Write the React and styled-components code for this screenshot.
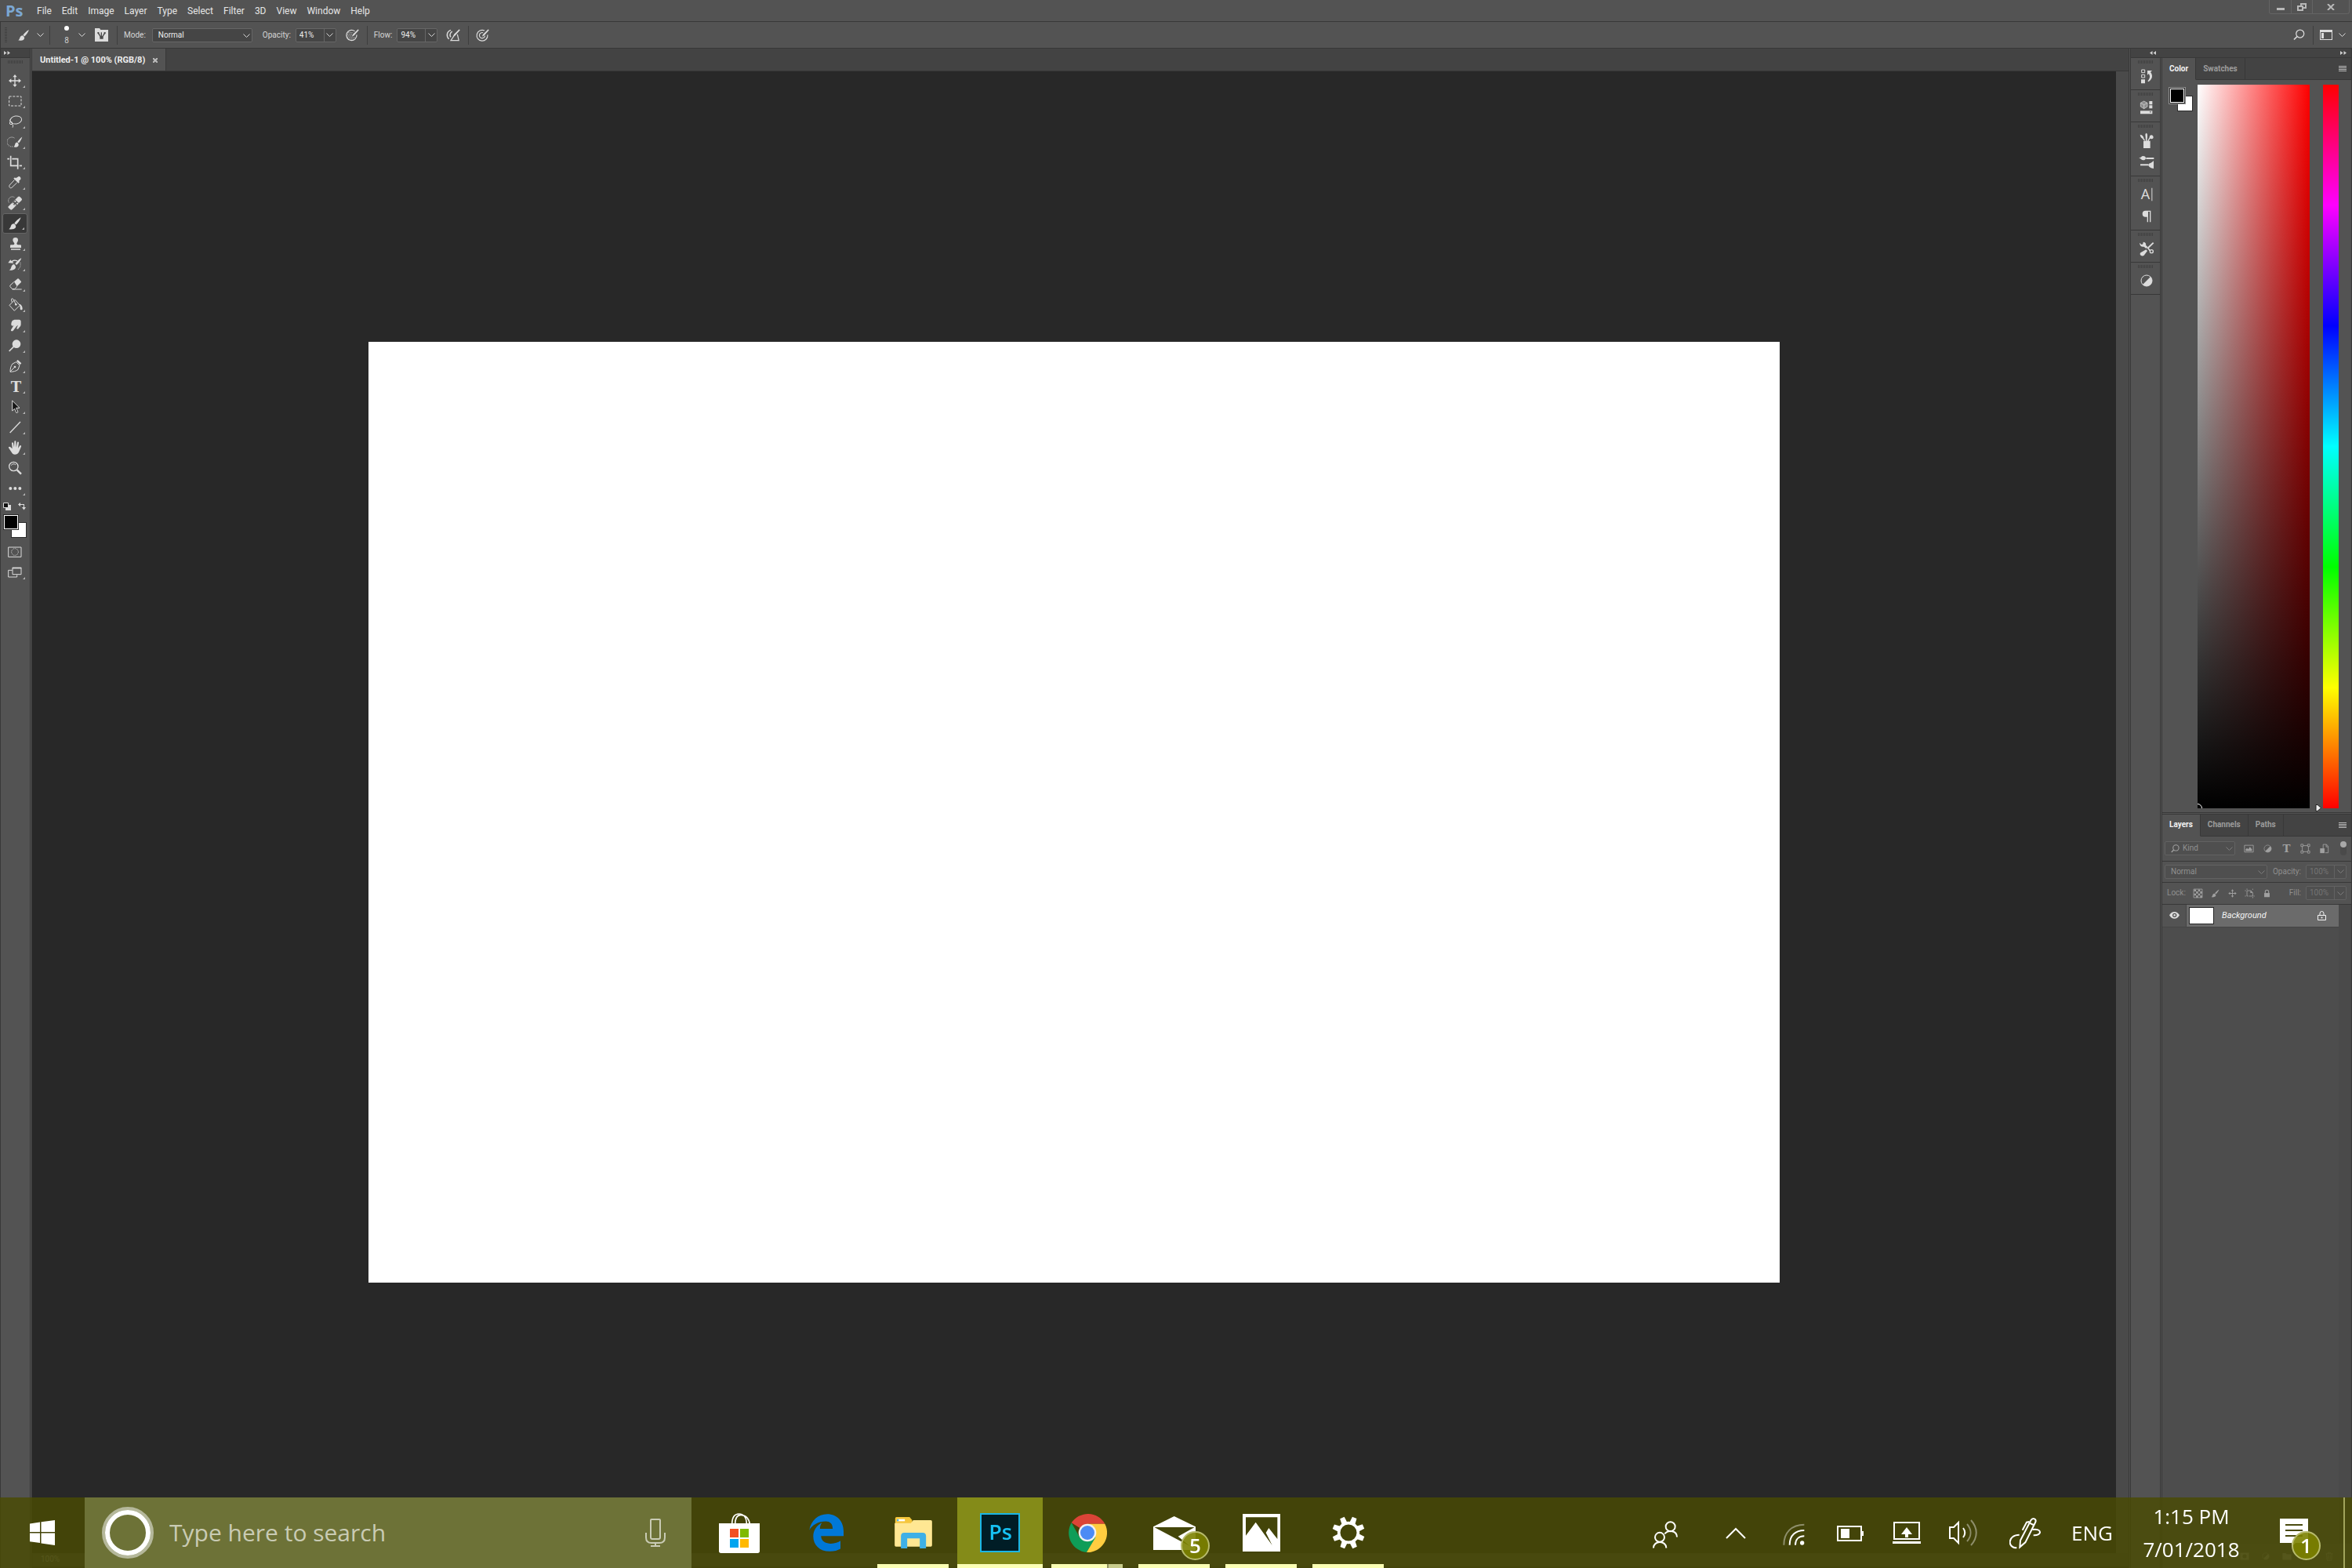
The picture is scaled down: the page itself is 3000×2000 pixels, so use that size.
import React, { useState } from 'react';
import styled, { createGlobalStyle, css } from 'styled-components';

const GlobalStyle = createGlobalStyle`
  *, *::before, *::after { box-sizing: border-box; }
  html, body, #root { height: 100%; }
  body {
    margin: 0;
    overflow: hidden;
    background: #282828;
    color: #dcdcdc;
    font-family: Roboto, 'Liberation Sans', sans-serif;
    font-size: 10px;
    line-height: 14px;
  }
  button, input, select { font: inherit; color: inherit; }
  svg { display: block; flex: none; }
`;

const LINE = '#383838';
const PANEL = '#535353';
const DARK = '#434343';

const Window = styled.div`
  display: flex;
  flex-direction: column;
  height: 100vh;
  background: ${PANEL};
`;

const PlainButton = styled.button`
  display: flex;
  align-items: center;
  justify-content: center;
  margin: 0;
  padding: 0;
  border: 0;
  outline: 0;
  background: transparent;
  cursor: pointer;
`;

/* ---- menu bar ---- */

const MenuBar = styled.header`
  display: flex;
  align-items: center;
  height: 28px;
  flex: none;
  padding: 0 3px 0 7px;
  border-bottom: 1px solid ${LINE};
`;

const PsLogo = styled.span`
  width: 34px;
  font: 700 20px/24px 'Open Sans', sans-serif;
  color: #7ba7d3;
`;

const MenuItem = styled(PlainButton)`
  padding: 0 7px 0 6px;
  font-size: 12px;
  line-height: 16px;
  color: #e6e6e6;
`;

const WindowControls = styled.div`
  display: flex;
  align-self: flex-start;
  height: 18px;
  margin-left: auto;
  border: 1px solid #646464;
  border-top: 0;
  border-radius: 0 0 3px 3px;
`;

const WindowControl = styled(PlainButton)`
  width: ${(p) => p.$width}px;
  & + & {
    border-left: 1px solid #646464;
  }
`;

/* ---- options bar ---- */

const OptionsBar = styled.div`
  display: flex;
  align-items: center;
  height: 34px;
  flex: none;
  padding: 0 8px 0 5px;
  border-bottom: 1px solid ${LINE};
  border-left: 1px solid ${LINE};
`;

const SideGrip = styled.span`
  width: 3px;
  height: 20px;
  background: repeating-linear-gradient(#414141 0 1px, transparent 1px 2px);
`;

const Separator = styled.span`
  width: 1px;
  height: 24px;
  margin: 0 ${(p) => p.$right || 8}px 0 ${(p) => p.$left || 10}px;
  background: #3e3e3e;
`;

const OptionButton = styled(PlainButton)`
  gap: 8px;
  margin-left: ${(p) => p.$left || 0}px;
`;

const BrushSize = styled.span`
  display: flex;
  flex-direction: column;
  align-items: center;
  justify-content: space-between;
  width: 14px;
  height: 24px;
  color: #cfcfcf;
  line-height: 10px;

  &::before {
    content: '';
    width: 6px;
    height: 6px;
    border-radius: 3px;
    background: #fff;
  }
`;

const Field = styled.div`
  display: flex;
  align-items: center;
  gap: ${(p) => p.$gap || 6}px;
  margin-left: ${(p) => p.$left || 0}px;
  color: ${(p) => (p.$dim ? '#8f8f8f' : '#d6d6d6')};
`;

const SelectBox = styled.span`
  position: relative;
  display: flex;
  width: ${(p) => p.$width}px;
  height: 18px;
  color: ${(p) => (p.$dim ? '#7d7d7d' : '#d6d6d6')};

  svg {
    position: absolute;
    right: 3px;
    top: 7px;
    pointer-events: none;
  }
`;

const Select = styled.select`
  width: 100%;
  height: 18px;
  padding: 0 7px;
  border: 1px solid ${(p) => (p.$dim ? '#626262' : '#666')};
  border-radius: 2px;
  outline: 0;
  appearance: none;
  background: ${(p) => (p.$dim ? '#4f4f4f' : '#454545')};
  color: ${(p) => (p.$dim ? '#919191' : '#ececec')};
`;

const ValueBox = styled.span`
  display: flex;
  height: 18px;
  border: 1px solid ${(p) => (p.$dim ? '#626262' : '#666')};
  border-radius: 2px;
  background: ${(p) => (p.$dim ? '#4f4f4f' : '#454545')};
  color: ${(p) => (p.$dim ? '#747474' : '#ececec')};

  input {
    width: 35px;
    padding: 0 0 0 4px;
    border: 0;
    outline: 0;
    background: transparent;
  }

  button {
    width: 15px;
    border-left: 1px solid ${(p) => (p.$dim ? '#626262' : '#666')};
    color: ${(p) => (p.$dim ? '#7d7d7d' : '#d6d6d6')};
  }
`;

const OptionsRight = styled.div`
  display: flex;
  align-items: center;
  margin-left: auto;
`;

/* ---- workspace ---- */

const Workspace = styled.main`
  display: flex;
  flex: 1;
  min-height: 0;
`;

const ToolColumn = styled.nav`
  display: flex;
  flex-direction: column;
  width: 39px;
  flex: none;
  border: solid ${LINE};
  border-width: 0 1px;
`;

const ColumnHeader = styled.div`
  display: flex;
  align-items: center;
  justify-content: space-between;
  height: 12px;
  flex: none;
  padding: 0 6px 0 ${(p) => p.$left || 4}px;
  border-bottom: 1px solid ${LINE};
  background: ${DARK};
`;

const Grip = styled.span`
  width: 19px;
  height: 4px;
  margin: 3px auto ${(p) => p.$bottom || 0}px;
  flex: none;
  background: repeating-linear-gradient(90deg, #404040 0 1px, transparent 1px 2px);
`;

const ToolButton = styled(PlainButton)`
  position: relative;
  width: 32px;
  height: 26px;
  margin-left: 2px;
  border-radius: 3px;

  ${(p) =>
    p.$active &&
    css`
      border: 1px solid #666;
      background: #383838;
    `}

  ${(p) =>
    p.$more &&
    css`
      &::after {
        content: '';
        position: absolute;
        right: 3px;
        bottom: 4px;
        border-left: 3px solid transparent;
        border-bottom: 3px solid #b4b4b4;
      }
    `}
`;

const SwatchActions = styled.div`
  display: flex;
  justify-content: space-between;
  padding: 5px 5px 5px 3px;
`;

const Swatches = styled.div`
  position: relative;
  width: 30px;
  height: 30px;
  margin: ${(p) => p.$margin || '0'};
  flex: none;

  &::before,
  &::after {
    content: '';
    position: absolute;
    width: 20px;
    height: 20px;
    border: 1px solid #2c2c2c;
    background: #fff;
  }
  &::before {
    right: 0;
    bottom: 0;
  }
  &::after {
    left: 0;
    top: 0;
    background: #000;
    box-shadow: inset 0 0 0 1px #fff;
    outline: ${(p) => (p.$ring ? '1px solid #909090' : 'none')};
  }
`;

const DocumentArea = styled.section`
  display: flex;
  flex-direction: column;
  flex: 1;
  min-width: 0;
  margin: 0 1px;
  border: solid ${LINE};
  border-width: 0 1px;
`;

const DocumentTabs = styled.div`
  display: flex;
  height: 29px;
  flex: none;
  border-bottom: 1px solid ${LINE};
  background: ${DARK};
`;

const DocumentTab = styled.div`
  display: flex;
  align-items: center;
  gap: 10px;
  padding: 2px 10px 0;
  border-right: 1px solid ${LINE};
  background: ${PANEL};
  color: #eee;
  font-size: 11px;
  font-weight: 700;
`;

const Viewport = styled.div`
  display: flex;
  flex: 1;
  min-height: 0;
`;

const Pasteboard = styled.div`
  display: flex;
  align-items: center;
  justify-content: center;
  flex: 1;
  min-width: 0;
  overflow: hidden;
  background: #282828;
`;

const Artboard = styled.canvas`
  background: #fff;
`;

const ScrollTrack = styled.div`
  width: 16px;
  background: #4a4a4a;
`;

const StatusBar = styled.footer`
  display: flex;
  align-items: center;
  height: 19px;
  flex: none;
  padding: 0 0 2px 11px;
  border-bottom: 2px solid #303030;
  background: #464646;
  color: #8a8a8a;
`;

/* ---- right dock ---- */

const Dock = styled.aside`
  display: flex;
  flex-direction: column;
  width: 283px;
  flex: none;
  border: solid ${LINE};
  border-width: 0 1px;
`;

const DockBody = styled.div`
  display: flex;
  flex: 1;
  min-height: 0;
`;

const IconRail = styled.div`
  display: flex;
  flex-direction: column;
  width: 38px;
  flex: none;
  margin-right: 1px;
  border-right: 1px solid ${LINE};
`;

const RailGroup = styled.div`
  display: flex;
  flex-direction: column;
  padding-bottom: 3px;
  border-bottom: 1px solid ${LINE};
`;

const RailButton = styled(PlainButton)`
  height: 28px;
  padding-left: 2px;
`;

const Panels = styled.div`
  display: flex;
  flex-direction: column;
  flex: 1;
  min-width: 0;
  border-left: 1px solid ${LINE};
`;

const Panel = styled.section`
  display: flex;
  flex-direction: column;
  flex: 1 1 0;
  min-height: 0;

  & + & {
    background: #4d4d4d;
  }
  &:first-child {
    border-bottom: 3px double ${LINE};
  }
`;

const PanelTabs = styled.div`
  display: flex;
  height: 28px;
  flex: none;
  background: ${DARK};
`;

const PanelTab = styled(PlainButton)`
  padding: 0 9px;
  border-right: 1px solid ${LINE};
  border-bottom: 1px solid ${(p) => (p.$active ? PANEL : LINE)};
  background: ${(p) => (p.$active ? PANEL : DARK)};
  color: ${(p) => (p.$active ? '#f2f2f2' : '#9c9c9c')};
  font-weight: 700;
`;

const PanelMenu = styled(PlainButton)`
  flex: 1;
  justify-content: flex-end;
  padding-right: 6px;
  border-bottom: 1px solid ${LINE};
`;

const ColorBody = styled.div`
  display: flex;
  flex: 1;
  min-height: 0;
  padding: 6px 16px 5px 9px;
`;

const ColorField = styled.div`
  position: relative;
  flex: 1;
  overflow: hidden;
  margin: 0 17px 0 6px;
  background: linear-gradient(to top, #000, transparent),
    linear-gradient(to right, #fff, #f00);

  &::after {
    content: '';
    position: absolute;
    left: -6px;
    bottom: -6px;
    width: 12px;
    height: 12px;
    border: 1px solid #fff;
    border-radius: 6px;
  }
`;

const HueStrip = styled.div`
  position: relative;
  width: 20px;
  background: linear-gradient(#f00, #f0f, #00f, #0ff, #0f0, #ff0, #f00);

  svg {
    position: absolute;
    left: -10px;
    bottom: -4px;
  }
`;

const LayerRow = styled.div`
  display: flex;
  align-items: center;
  height: ${(p) => p.$height}px;
  flex: none;
  padding: 0 6px 0 ${(p) => p.$left || 3}px;
  border-bottom: 1px solid ${LINE};
  background: ${PANEL};
`;

const KindBox = styled(SelectBox)`
  select {
    padding-left: 22px;
  }
  svg:first-child {
    left: 8px;
    top: 4px;
    right: auto;
  }
`;

const LayerIcons = styled.div`
  display: flex;
  align-items: center;
  gap: ${(p) => p.$gap}px;
  margin-left: ${(p) => p.$left}px;
  color: #a0a0a0;
`;

const FilterToggle = styled(PlainButton)`
  align-items: flex-start;
  width: 8px;
  height: 18px;
  margin-left: auto;
  border-radius: 4px;
  background: #4a4a4a;

  &::before {
    content: '';
    width: 8px;
    height: 8px;
    border-radius: 4px;
    background: #a8a8a8;
  }
`;

const LayerList = styled.div`
  display: flex;
  flex: 1;
  min-height: 0;
`;

const LayerItems = styled.div`
  flex: 1;
`;

const LayerItem = styled.div`
  display: flex;
  height: 29px;
  border-bottom: 1px solid #454545;
`;

const EyeButton = styled(PlainButton)`
  width: 31px;
  border-right: 1px solid #454545;
  background: ${PANEL};
`;

const LayerBody = styled.div`
  display: flex;
  align-items: center;
  flex: 1;
  padding: 0 16px 0 3px;
  background: #6b6b6b;
  color: #f4f4f4;
  font-size: 11px;
  font-style: italic;

  svg {
    margin-left: auto;
  }
`;

const Thumb = styled.span`
  width: 32px;
  height: 22px;
  margin-right: 10px;
  border: 1px solid #262626;
  background: #fff;
`;

const LayersFooter = styled.footer`
  display: flex;
  align-items: center;
  justify-content: flex-end;
  gap: 15px;
  height: 31px;
  flex: none;
  padding: 0 22px;
  background: ${PANEL};
  color: #8a8a8a;
`;

/* ---- windows taskbar ---- */

const Taskbar = styled.footer`
  position: fixed;
  right: 0;
  bottom: 0;
  left: 0;
  display: flex;
  height: 90px;
  background: rgba(73, 74, 2, 0.82);
  color: #fff;
  font-family: 'Open Sans', sans-serif;
  font-size: 26px;
  line-height: 42px;
`;

const StartButton = styled(PlainButton)`
  width: 108px;
`;

const SearchBox = styled.label`
  display: flex;
  align-items: center;
  width: 774px;
  margin-right: 6px;
  padding: 0 33px 0 22px;
  background: #6d7237;

  input {
    flex: 1;
    min-width: 0;
    margin-left: 20px;
    padding: 0;
    border: 0;
    outline: 0;
    background: transparent;
    font-size: 30px;
    line-height: 40px;

    &::placeholder {
      color: #c9cbb4;
      opacity: 1;
    }
  }
`;

const AppButton = styled(PlainButton)`
  position: relative;
  width: 109px;
  margin-right: 2px;
  background: ${(p) => (p.$active ? '#848b18' : 'transparent')};

  ${(p) =>
    p.$running &&
    css`
      &::after {
        content: '';
        position: absolute;
        right: ${p.$active ? 0 : 9}px;
        bottom: 0;
        left: ${p.$active ? 0 : 9}px;
        height: 5px;
        background: ${p.$stacked
          ? 'linear-gradient(90deg, #fbffb4 71px, #8f9160 71px 73px, #c8cc8c 73px)'
          : '#fbffb4'};
      }
    `}
`;

const Badge = styled.span`
  position: absolute;
  left: ${(p) => p.$x}px;
  top: 43px;
  width: 37px;
  height: 37px;
  border: 2px solid #b6ba6c;
  border-radius: 19px;
  background: rgba(124, 130, 0, 0.9);
  font-size: 26px;
  font-weight: 600;
  line-height: 32px;
  text-align: center;
`;

const Tray = styled.div`
  display: flex;
  margin-left: auto;
`;

const TrayButton = styled(PlainButton)`
  position: relative;
  width: ${(p) => p.$width}px;
  padding-top: ${(p) => p.$drop || 0}px;
`;

const Clock = styled(TrayButton)`
  flex-direction: column;
`;

const ShowDesktop = styled(PlainButton)`
  width: 11px;
  margin-left: 16px;
  border-left: 2px solid #a2a45c;
`;

/* ---- icons ---- */

const Icon = ({ size = 20, box = 60, width, height, viewBox, children, ...rest }) => (
  <svg
    width={width || size}
    height={height || size}
    viewBox={viewBox || `0 0 ${box} ${box}`}
    fill="currentColor"
    aria-hidden="true"
    {...rest}
  >
    {children}
  </svg>
);

const stroke = (w = 3) => ({ fill: 'none', stroke: 'currentColor', strokeWidth: w });

const Chevron = () => (
  <svg width="9" height="5" viewBox="0 0 9 5" fill="none" stroke="currentColor" aria-hidden="true">
    <path d="M.5.5l4 4 4-4" />
  </svg>
);

const DoubleArrow = ({ left }) => (
  <svg width="8" height="5" viewBox="0 0 8 5" fill="#d0d0d0" aria-hidden="true">
    <path d={left ? 'M3.5 0v5L0 2.500zM8 0v5L4.500 2.500z' : 'M0 0v5l3.500-2.500zM4.500 0v5L8 2.500z'} />
  </svg>
);

const BrushShape = () => (
  <>
    <path d="M53 7c-9 5-19 14-25 22l6 6c8-7 15-17 19-28z" />
    <path d="M26 31c-5 0-9 3-11 8-2 6-4 10-8 13 9 1 18 1 23-3 4-3 5-8 2-12-1-3-3-5-6-6z" />
  </>
);

const MoveShape = () => (
  <path d="M30 6l8 10h-6v12h12v-6l10 8-10 8v-6H32v12h6l-8 10-8-10h6V32H16v6L6 30l10-8v6h12V16h-6z" />
);

const LockShape = () => (
  <>
    <path {...stroke(5)} d="M20 30V20a10 10 0 0120 0v10" />
    <path d="M14 28h32v24H14z" />
  </>
);

const HalfCircle = () => (
  <>
    <circle cx="30" cy="30" r="21" {...stroke(3)} />
    <path d="M45 15a21 21 0 010 30 21 21 0 01-30 0z" />
  </>
);

const PressureIcon = ({ children }) => (
  <Icon size={18}>
    {children}
    <path d="M56 4L34 26l-5 10 10-5L59 8z" />
  </Icon>
);

const tools = [
  { name: 'Move', art: <MoveShape /> },
  {
    name: 'Rectangular Marquee',
    art: <path {...stroke()} strokeDasharray="9 5" d="M8 12h46v36H8z" />,
  },
  {
    name: 'Lasso',
    art: (
      <g {...stroke()}>
        <ellipse cx="34" cy="24" rx="22" ry="15" transform="rotate(-10 34 24)" />
        <circle cx="15" cy="36" r="5" />
        <path d="M12 31c-3-3-1-8 2-11M18 39c6 2 5 8 3 14" />
      </g>
    ),
  },
  {
    name: 'Quick Selection',
    art: (
      <>
        <path {...stroke()} strokeDasharray="3 3" d="M28 15a18 18 0 10-4 32" />
        <g transform="translate(20 4) scale(.72 .88)">
          <BrushShape />
        </g>
      </>
    ),
  },
  {
    name: 'Crop',
    art: (
      <g {...stroke(5)}>
        <path d="M14 5v38h30M1 17h8M19 17h22v39M47 43h10" />
      </g>
    ),
  },
  {
    name: 'Eyedropper',
    art: (
      <>
        <path d="M41 8c5-5 14 2 11 9l-7 7 3 3-4 5-19-18 5-4 3 3z" />
        <path {...stroke()} d="M28 20L10 39c-2 3-2 6 0 9s5 3 8 1l20-19" />
      </>
    ),
  },
  {
    name: 'Spot Healing Brush',
    art: (
      <>
        <path {...stroke()} strokeDasharray="3 3" d="M7 28A15 15 0 0128 8" />
        <path d="M6 42L42 6q4-3 8 1l5 5q4 4 0 8L20 54q-4 4-8 0l-6-5q-4-4 0-7z" />
        <path d="M18 30l13-13 14 13-13 13z" fill="#535353" />
        <path d="M31 20l4 4-4 4-4-4zM23 28l4 4-4 4-4-4zM39 28l4 4-4 4-4-4zM31 34l4 4-4 4-4-4z" />
      </>
    ),
  },
  { name: 'Brush', art: <BrushShape /> },
  {
    name: 'Clone Stamp',
    art: (
      <path d="M32 6a10 10 0 0110 10c0 5-4 9-5 12 0 4 2 6 5 6h8c3 0 4 2 4 4v7H12v-7c0-3 2-4 4-4h8c3 0 4-3 4-6-1-3-6-6-6-12A10 10 0 0132 6zM15 49h36v4H15z" />
    ),
  },
  {
    name: 'History Brush',
    art: (
      <>
        <path d="M4 25l9-12 4 5c8-6 17-5 23-2l-2 3c-7-3-13-2-17 2l5 5zM55 6c-10 5-18 13-24 22l5 5C44 27 52 17 55 6zM27 30c-8 1-10 8-12 14-1 4-4 7-7 9 8 1 17 0 22-5 4-4 4-9 1-13z" />
        <path {...stroke()} strokeDasharray="3 4" d="M51 24v15l-9 12" />
      </>
    ),
  },
  {
    name: 'Eraser',
    art: (
      <>
        <path d="M27 19l14-12q2-1 4 1l9 10q1 2-1 4L38 37z" />
        <path {...stroke()} d="M26 20L12 33q-2 2 0 5l8 9h9l10-10M20 48h36" />
      </>
    ),
  },
  {
    name: 'Paint Bucket',
    art: (
      <>
        <path {...stroke()} d="M30 10L9 31l19 21 21-21zM34 28L23 7c-4-4-8 0-6 5l2 8" />
        <circle cx="34" cy="28" r="4" />
        <path d="M46 26c8 1 13 8 13 18 0 6-9 6-9 0 0-4 1-8-4-18z" />
      </>
    ),
  },
  {
    name: 'Smudge',
    art: (
      <path d="M16 26c0-12 6-18 16-18h14c5 0 7 3 7 8v11c0 7-6 10-11 17l-6-1 6-14c-6 3-9 9-13 14-3 5-6 10-10 9-3 0-5-2-4-5l11-18c-4 4-6 3-8 2-2-2-2-3-2-5z" />
    ),
  },
  {
    name: 'Dodge',
    art: (
      <>
        <circle cx="36" cy="23" r="16" />
        <path {...stroke(5)} d="M27 32L8 51" />
      </>
    ),
  },
  {
    name: 'Pen',
    art: (
      <>
        <path {...stroke()} d="M35 14l13 13-6 16c-8 7-18 8-30 9 0-12 2-22 9-31zM12 51l17-17" />
        <path d="M36 11l5-5 14 13-5 6z" />
        <circle cx="30" cy="33" r="4" />
      </>
    ),
  },
  {
    name: 'Type',
    art: (
      <text x="34" y="50" textAnchor="middle" fontFamily="DejaVu Serif, serif" fontWeight="700" fontSize="54">
        T
      </text>
    ),
  },
  {
    name: 'Path Selection',
    art: (
      <path
        d="M20 6v39l9-8 7 16 6-3-7-16h13z"
        fill="#161616"
        stroke="#dcdcdc"
        strokeWidth="3"
      />
    ),
  },
  { name: 'Line', art: <path {...stroke(4)} d="M11 51L51 9" /> },
  {
    name: 'Hand',
    art: (
      <path d="M20 34L18 13c0-4 5-4 6 0l3 16 1-22c0-4 6-4 6 0l1 22 4-19c1-4 6-3 6 1l-3 21 6-9c3-4 8-1 6 3L45 47c-3 6-8 9-15 9-6 0-10-3-13-9L6 31c-2-4 4-7 7-3z" />
    ),
  },
  {
    name: 'Zoom',
    plain: true,
    art: (
      <>
        <circle cx="25" cy="24" r="17" {...stroke(4)} />
        <path {...stroke()} d="M16 20a10 10 0 0117-2" />
        <path {...stroke(7)} d="M38 37l16 16" />
      </>
    ),
  },
  {
    name: 'Edit Toolbar',
    art: (
      <>
        <circle cx="13" cy="30" r="6" />
        <circle cx="31" cy="30" r="6" />
        <circle cx="49" cy="30" r="6" />
      </>
    ),
  },
];

const railGroups = [
  [
    {
      name: 'History',
      art: (
        <>
          <path {...stroke()} d="M11 6h12v11H11zM11 25h12v11H11z" />
          <path d="M9 43h15v15H9zM33 9h18l-6 6c10 12 8 27-8 37l-3-3c9-9 11-19 4-28l-5 5z" />
        </>
      ),
    },
  ],
  [
    {
      name: 'Libraries',
      art: (
        <>
          <path d="M20 3l13 7v14L20 32 7 24V10z" fill="#8c8c8c" />
          <path {...stroke(2)} d="M20 3l13 7v14L20 32 7 24V10zM7 10l13 7 13-7M20 17v15" />
          <path d="M40 3h12v13H40zM40 19h12v12H40zM6 40h46v12H6z" />
          <path d="M41 43h7l-3 5z" fill="#535353" />
        </>
      ),
    },
  ],
  [
    {
      name: 'Brush Presets',
      art: (
        <path d="M18 32h26v28H18zM5 8c8 1 15 8 14 14l6 9h-5l-6-8C8 20 6 14 5 8zM25 8c2-8 6-8 8 0v10l-2 14h-4l-1-14zM42 13c6-6 13-3 14 5 0 8-9 7-13 5l-5 9h-5l8-13z" />
      ),
    },
    {
      name: 'Brush Settings',
      art: (
        <path d="M0 13c9 1 9-7 17-7 6 0 10 4 10 8s-4 8-10 8C10 22 8 15 0 13zM28 12h30v6H28zM6 37h30v6H6zM57 24v30c-9 0-19-6-21-14 2-6 10-7 14-10 3-2 5-4 7-6z" />
      ),
    },
  ],
  [
    {
      name: 'Character',
      art: (
        <>
          <text x="8" y="48" fontFamily="Open Sans, sans-serif" fontSize="54">
            A
          </text>
          <path d="M49 5h3v50h-3z" />
        </>
      ),
    },
    {
      name: 'Paragraph',
      art: <path d="M46 8v44h-4V12h-6v40h-4V32H26a12 12 0 010-24z" />,
    },
  ],
  [
    {
      name: 'Tool Presets',
      art: (
        <>
          <path d="M3 8l8 7 5-2 1-8c9 0 12 7 10 12l7 7-6 6-8-7C12 25 4 21 3 8zM54 6l4 4-23 22-4-4zM28 34l5 5-13 17c-5 5-16 1-15-6 0-2 1-3 2-4zM32 28l4-2 9 10-4 4z" />
          <circle cx="49" cy="41" r="6" {...stroke(4)} />
        </>
      ),
    },
  ],
  [{ name: 'Adjustments', art: <HalfCircle /> }],
];

const layerFilters = [
  {
    name: 'Filter for pixel layers',
    art: (
      <>
        <path {...stroke(4)} d="M4 10h52v40H4z" />
        <path d="M11 44V34l8-8 7 7 10-13 12 14v10z" />
      </>
    ),
  },
  { name: 'Filter for adjustment layers', art: <HalfCircle /> },
  {
    name: 'Filter for type layers',
    art: (
      <text x="30" y="53" textAnchor="middle" fontFamily="DejaVu Serif, serif" fontWeight="700" fontSize="62">
        T
      </text>
    ),
  },
  {
    name: 'Filter for shape layers',
    art: (
      <g {...stroke(4)}>
        <path d="M12 12h36v36H12z" />
        <path fill="#535353" d="M4 4h13v13H4zM43 4h13v13H43zM4 43h13v13H4zM43 43h13v13H43z" />
      </g>
    ),
  },
  {
    name: 'Filter for smart objects',
    art: (
      <>
        <path {...stroke(4)} d="M24 30V5h20l10 12v37H36M42 5v14h12" />
        <path d="M6 28h26v28H6z" />
      </>
    ),
  },
];

const locks = [
  {
    name: 'Lock transparent pixels',
    art: (
      <>
        <path {...stroke(4)} d="M5 5h50v50H5z" />
        <path d="M7 7h12v12H7zM31 7h12v12H31zM19 19h12v12H19zM43 19h12v12H43zM7 31h12v12H7zM31 31h12v12H31zM19 43h12v12H19zM43 43h12v12H43z" />
      </>
    ),
  },
  { name: 'Lock image pixels', art: <BrushShape /> },
  { name: 'Lock position', art: <MoveShape /> },
  {
    name: 'Prevent auto-nesting',
    art: (
      <>
        <path {...stroke(4)} d="M14 2v7M14 14v32h7M2 14h6M14 14h24l10 12v20H26M48 50v8M53 46h6M48 3v6M2 46h6" />
        <path d="M34 14v14h14z" />
      </>
    ),
  },
  { name: 'Lock all', art: <LockShape /> },
];

/* ---- sections ---- */

const menus = ['File', 'Edit', 'Image', 'Layer', 'Type', 'Select', 'Filter', '3D', 'View', 'Window', 'Help'];

const PercentField = ({ id, label, value, left, dim }) => {
  const [percent, setPercent] = useState(value);
  return (
    <Field $left={left} $dim={dim}>
      <label htmlFor={id}>{label}</label>
      <ValueBox $dim={dim}>
        <input id={id} value={percent} onChange={(e) => setPercent(e.target.value)} />
        <PlainButton aria-label={`${label} slider`}>
          <Chevron />
        </PlainButton>
      </ValueBox>
    </Field>
  );
};

const TopMenu = () => (
  <MenuBar>
    <PsLogo>Ps</PsLogo>
    {menus.map((menu) => (
      <MenuItem key={menu}>{menu}</MenuItem>
    ))}
    <WindowControls>
      <WindowControl $width={27} aria-label="Minimize">
        <Icon width={10} height={10} viewBox="0 0 10 10" color="#b8b8b8">
          <path d="M0 6h10v3H0z" />
        </Icon>
      </WindowControl>
      <WindowControl $width={27} aria-label="Restore">
        <Icon width={12} height={10} viewBox="0 0 12 10" color="#b8b8b8">
          <path {...stroke(2)} d="M5 3V1h6v5H8M1 4h6v5H1z" />
        </Icon>
      </WindowControl>
      <WindowControl $width={47} aria-label="Close">
        <Icon width={10} height={8} viewBox="0 0 10 8" color="#b8b8b8">
          <path {...stroke(2)} d="M1 0l8 8M9 0L1 8" />
        </Icon>
      </WindowControl>
    </WindowControls>
  </MenuBar>
);

const ToolOptions = () => (
  <OptionsBar>
    <SideGrip />
    <OptionButton $left={12} aria-label="Brush tool presets">
      <Icon size={18}>
        <BrushShape />
      </Icon>
      <Chevron />
    </OptionButton>
    <Separator $left={7} $right={14} />
    <OptionButton aria-label="Brush preset picker">
      <BrushSize>8</BrushSize>
      <Chevron />
    </OptionButton>
    <OptionButton $left={12} aria-label="Brush panel">
      <Icon width={17} height={17} viewBox="0 0 51 51">
        <path d="M0 0h18l4 6h29v45H0z" />
        <g fill="none" stroke="#4a4a4a" strokeWidth="4">
          <path d="M14 20l9 14M25 16v18M37 20l-9 14" />
        </g>
        <path fill="#4a4a4a" d="M19 31h13v10H19zM10 15h6v8l-6-3zM35 15h6v6l-6 2z" />
      </Icon>
    </OptionButton>
    <Separator $left={11} />
    <Field $gap={8}>
      <label htmlFor="mode">Mode:</label>
      <SelectBox $width={128}>
        <Select id="mode">
          <option>Normal</option>
        </Select>
        <Chevron />
      </SelectBox>
    </Field>
    <PercentField id="opacity" label="Opacity:" value="41%" left={13} />
    <OptionButton $left={11} aria-label="Pressure for opacity">
      <PressureIcon>
        <path {...stroke(4)} d="M42 13A22 22 0 1050 28" />
        <path {...stroke(3)} strokeDasharray="3 3" d="M10 26h20M8 33h20M10 40h34M16 47h24M14 19h20" />
      </PressureIcon>
    </OptionButton>
    <Separator />
    <PercentField id="flow" label="Flow:" value="94%" />
    <OptionButton $left={11} aria-label="Airbrush">
      <PressureIcon>
        <path {...stroke(5)} d="M20 8C2 14 0 34 12 46M26 14c-10 6-12 16-6 24" />
        <path {...stroke(4)} d="M38 26L20 52h34l-6-26" />
      </PressureIcon>
    </OptionButton>
    <Separator />
    <OptionButton aria-label="Pressure for size">
      <PressureIcon>
        <path {...stroke(4)} d="M40 10A23 23 0 1053 28" />
        <path {...stroke(4)} d="M34 19A12 12 0 1042 32" />
      </PressureIcon>
    </OptionButton>
    <OptionsRight>
      <PlainButton aria-label="Search">
        <Icon size={15}>
          <circle cx="35" cy="24" r="20" {...stroke(5)} />
          <path {...stroke(7)} d="M20 38L4 54" />
        </Icon>
      </PlainButton>
      <Separator />
      <OptionButton aria-label="Choose a workspace">
        <Icon width={16} height={13} viewBox="0 0 16 13">
          <path d="M0 0h16v13H0zM1 3v9h14V3z" fillRule="evenodd" />
          <path d="M2 4h3v7H2z" />
        </Icon>
        <Chevron />
      </OptionButton>
    </OptionsRight>
  </OptionsBar>
);

const Toolbar = () => {
  const [active, setActive] = useState('Brush');
  return (
    <ToolColumn>
      <ColumnHeader>
        <DoubleArrow />
      </ColumnHeader>
      <Grip $bottom={9} />
      {tools.map((tool) => (
        <ToolButton
          key={tool.name}
          aria-label={tool.name}
          $active={tool.name === active}
          $more={!tool.plain}
          onClick={() => setActive(tool.name)}
        >
          <Icon>{tool.art}</Icon>
        </ToolButton>
      ))}
      <SwatchActions>
        <Icon width={10} height={10} viewBox="0 0 10 10">
          <path d="M3 3h7v7H3z" />
          <path d="M.5.5h6v6h-6z" fill="#111" stroke="#dcdcdc" />
        </Icon>
        <Icon width={10} height={10} viewBox="0 0 10 10">
          <path d="M3 0v2h5v4h2L7.500 9.500 5 6h2V3H3v2L0 2.500z" />
        </Icon>
      </SwatchActions>
      <Swatches $margin="0 0 5px 3px" />
      <ToolButton aria-label="Quick Mask">
        <Icon>
          <path {...stroke()} d="M5 12h49v37H5z" />
          <circle cx="30" cy="30" r="13" {...stroke()} strokeDasharray="3 3" />
        </Icon>
      </ToolButton>
      <ToolButton $more aria-label="Screen Mode">
        <Icon>
          <path {...stroke()} d="M20 22H5v26h33v-8M21 13h33v25H21z" />
          <path d="M20 11h35v5H20z" />
        </Icon>
      </ToolButton>
    </ToolColumn>
  );
};

const Document = () => (
  <DocumentArea>
    <DocumentTabs>
      <DocumentTab>
        Untitled-1 @ 100% (RGB/8)
        <PlainButton aria-label="Close document">
          <Icon width={6} height={6} viewBox="0 0 6 6" color="#bdbdbd">
            <path {...stroke(2)} d="M0 0l6 6M6 0L0 6" />
          </Icon>
        </PlainButton>
      </DocumentTab>
    </DocumentTabs>
    <Viewport>
      <Pasteboard>
        <Artboard width="1800" height="1200" />
      </Pasteboard>
      <ScrollTrack />
    </Viewport>
    <StatusBar>100%</StatusBar>
  </DocumentArea>
);

const PanelHeader = ({ tabs }) => {
  const [active, setActive] = useState(tabs[0]);
  return (
    <PanelTabs>
      {tabs.map((tab) => (
        <PanelTab key={tab} $active={tab === active} onClick={() => setActive(tab)}>
          {tab}
        </PanelTab>
      ))}
      <PanelMenu aria-label="Panel menu">
        <Icon width={10} height={7} viewBox="0 0 10 7" color="#bcbcbc">
          <path d="M0 0h10v1H0zM0 2h10v1H0zM0 4h10v1H0zM0 6h10v1H0z" />
        </Icon>
      </PanelMenu>
    </PanelTabs>
  );
};

const LayersPanel = () => (
  <Panel>
    <PanelHeader tabs={['Layers', 'Channels', 'Paths']} />
    <LayerRow $height={32}>
      <KindBox $width={90} $dim>
        <Icon size={11} color="#a0a0a0">
          <circle cx="35" cy="24" r="20" {...stroke(6)} />
          <path {...stroke(8)} d="M20 38L4 54" />
        </Icon>
        <Select $dim aria-label="Filter type">
          <option>Kind</option>
        </Select>
        <Chevron />
      </KindBox>
      <LayerIcons $gap={11} $left={11}>
        {layerFilters.map((f) => (
          <PlainButton key={f.name} aria-label={f.name}>
            <Icon size={13}>{f.art}</Icon>
          </PlainButton>
        ))}
      </LayerIcons>
      <FilterToggle aria-label="Toggle layer filtering" />
    </LayerRow>
    <LayerRow $height={27}>
      <SelectBox $width={131} $dim>
        <Select $dim aria-label="Blend mode">
          <option>Normal</option>
        </Select>
        <Chevron />
      </SelectBox>
      <OptionsRight>
        <PercentField id="layer-opacity" label="Opacity:" value="100%" dim />
      </OptionsRight>
    </LayerRow>
    <LayerRow $height={28} $left={6}>
      <Field $dim>Lock:</Field>
      <LayerIcons $gap={9} $left={9}>
        {locks.map((l) => (
          <PlainButton key={l.name} aria-label={l.name}>
            <Icon size={13}>{l.art}</Icon>
          </PlainButton>
        ))}
      </LayerIcons>
      <OptionsRight>
        <PercentField id="fill" label="Fill:" value="100%" dim />
      </OptionsRight>
    </LayerRow>
    <LayerList>
      <LayerItems>
        <LayerItem>
          <EyeButton aria-label="Layer visibility">
            <Icon width={13} height={9} viewBox="0 0 39 27">
              <path d="M0 13C10-4 29-4 39 13 29 31 10 31 0 13z" />
              <circle cx="20" cy="13" r="8" fill="#535353" />
              <circle cx="20" cy="13" r="4" />
            </Icon>
          </EyeButton>
          <LayerBody>
            <Thumb />
            Background
            <Icon width={11} height={12} viewBox="0 0 11 12">
              <path {...stroke(1)} d="M.5 5.500h10v6H.5zM3 5.500V3a2.500 2.500 0 015 0v2.500" />
              <circle cx="5.500" cy="8.500" r="1" />
            </Icon>
          </LayerBody>
        </LayerItem>
      </LayerItems>
      <ScrollTrack />
    </LayerList>
    <LayersFooter>
      <span>fx</span>
      <Icon size={12}>
        <path fillRule="evenodd" d="M2 8h56v44H2zM30 17a13 13 0 100 26 13 13 0 000-26z" />
      </Icon>
      <Icon size={12}>
        <HalfCircle />
      </Icon>
      <Icon size={12}>
        <path d="M2 10h20l6 8h30v34H2z" />
      </Icon>
      <Icon size={12}>
        <path {...stroke(4)} d="M8 8h44v44H24L8 36zM8 36h16v16" />
      </Icon>
      <Icon size={12}>
        <path {...stroke(4)} d="M8 14h44M22 14V6h16v8M13 14l3 42h28l3-42M24 22v26M36 22v26" />
      </Icon>
    </LayersFooter>
  </Panel>
);

const RightDock = () => (
  <Dock>
    <ColumnHeader $left={24}>
      <DoubleArrow left />
      <DoubleArrow />
    </ColumnHeader>
    <DockBody>
      <IconRail>
        {railGroups.map((group) => (
          <RailGroup key={group[0].name}>
            <Grip $bottom={2} />
            {group.map((item) => (
              <RailButton key={item.name} aria-label={item.name}>
                <Icon>{item.art}</Icon>
              </RailButton>
            ))}
          </RailGroup>
        ))}
      </IconRail>
      <Panels>
        <Panel>
          <PanelHeader tabs={['Color', 'Swatches']} />
          <ColorBody>
            <Swatches $margin="4px 0 0" $ring />
            <ColorField />
            <HueStrip>
              <Icon width={8} height={9} viewBox="0 0 8 9">
                <path d="M1 .5h2l4.500 4-4.500 4H1z" fill="#eee" stroke="#222" />
              </Icon>
            </HueStrip>
          </ColorBody>
        </Panel>
        <LayersPanel />
      </Panels>
    </DockBody>
  </Dock>
);

const StoreIcon = () => (
  <Icon width={52} height={51} viewBox="108 117 156 153">
    <path {...stroke(5)} d="M158 160c0-25 9-40 27-40s29 15 29 40M170 160c0-22 8-36 22-36 18 0 32 14 34 36" />
    <path d="M108 156h156v106q0 8-8 8H116q-8 0-8-8z" />
    <path fill="#f25022" d="M150 177h33v33h-33z" />
    <path fill="#7fba00" d="M189 177h33v33h-33z" />
    <path fill="#00a4ef" d="M150 216h33v33h-33z" />
    <path fill="#ffb900" d="M189 216h33v33h-33z" />
  </Icon>
);

const EdgeIcon = () => (
  <Icon width={44} height={48} viewBox="0 0 133 144" color="#0078d7">
    <path d="M1 62C7 25 34 0 70 0c40 0 63 30 63 66v19H46c1 22 20 29 38 29 16 0 28-5 37-11v31c-11 6-23 10-41 10-40 0-64-26-64-58 0-24 14-42 34-53-6 8-8 17-8 24h49c0-19-9-29-27-29C36 28 11 42 1 62z" />
  </Icon>
);

const FolderIcon = () => (
  <Icon width={48} height={40} viewBox="783 135 143 120">
    <path fill="#f5c63c" d="M785 140q0-5 5-5h50l10 12v20h-65z" />
    <path fill="#ffe793" d="M783 158h62l9-11h67q5 0 5 5v91q0 5-5 5H788q-5 0-5-5z" />
    <path fill="#fff" d="M792 143h30v8h-30z" />
    <path fill="#3fb0e6" d="M792 143h6v8h-6zM807 255v-47q0-13 13-13h70q13 0 13 13v47h-24v-38h-48v38z" />
  </Icon>
);

const PhotoshopIcon = () => (
  <Icon width={51} height={50} viewBox="0 0 51 50">
    <path d="M1 1h49v48H1z" fill="#001d26" stroke="#1ab6e6" strokeWidth="2" />
    <text x="26" y="34" textAnchor="middle" fill="#16c1f3" fontFamily="Open Sans, sans-serif" fontWeight="600" fontSize="27">
      Ps
    </text>
  </Icon>
);

const ChromeIcon = () => (
  <Icon width={50} height={50} viewBox="0 0 150 150">
    <path fill="#db4437" d="M75 75L14 37A75 75 0 01142 41H75z" />
    <path fill="#0f9d58" d="M75 75l34 18-37 57A75 75 0 0114 37l33 58z" />
    <path fill="#ffcd40" d="M75 41h67a75 75 0 01-70 109l34-57z" />
    <circle cx="75" cy="75" r="34" fill="#f1f1f1" />
    <circle cx="75" cy="75" r="27" fill="#4c8bf5" />
  </Icon>
);

const MailIcon = () => (
  <Icon width={54} height={43} viewBox="453 123 162 129">
    <path d="M453 163l80-40 82 40v89H453z" />
    <path fill="#44460a" d="M457 165h154l-63 35 45 37z" />
  </Icon>
);

const PhotosIcon = () => (
  <Icon width={48} height={48} viewBox="795 123 144 144">
    <path fillRule="evenodd" d="M795 123h144v144H795zm12 13v70l38-51 63 88-24-48 11-18 33 42v-83z" />
  </Icon>
);

const SettingsIcon = () => (
  <Icon width={42} height={42} viewBox="-63 -63 126 126">
    {[22, 67, 112, 157, 202, 247, 292, 337].map((angle) => (
      <path key={angle} transform={`rotate(${angle})`} d="M-11-38l2-24H9l2 24z" />
    ))}
    <circle r="37" {...stroke(11)} />
  </Icon>
);

const apps = [
  { name: 'Microsoft Store', icon: <StoreIcon /> },
  { name: 'Microsoft Edge', icon: <EdgeIcon /> },
  { name: 'File Explorer', icon: <FolderIcon />, running: true },
  { name: 'Adobe Photoshop', icon: <PhotoshopIcon />, running: true, active: true },
  { name: 'Google Chrome', icon: <ChromeIcon />, running: true, stacked: true },
  { name: 'Mail', icon: <MailIcon />, running: true, badge: 5 },
  { name: 'Photos', icon: <PhotosIcon />, running: true },
  { name: 'Settings', icon: <SettingsIcon />, running: true },
];

const trayIcons = [
  {
    name: 'People',
    width: 104,
    drop: 4,
    icon: (
      <Icon width={32} height={35} viewBox="144 143 96 104">
        <g {...stroke(6)}>
          <circle cx="171" cy="205" r="18" />
          <circle cx="212" cy="164" r="18" />
          <path d="M147 246c0-30 49-30 49 0M190 192c14-18 47-12 47 12" />
        </g>
      </Icon>
    ),
  },
  {
    name: 'Show hidden icons',
    width: 76,
    icon: (
      <Icon width={26} height={15} viewBox="0 0 26 15">
        <path {...stroke(2)} d="M1 14L13 2l12 12" />
      </Icon>
    ),
  },
  {
    name: 'Network',
    width: 72,
    drop: 4,
    icon: (
      <Icon width={28} height={28} viewBox="641 157 84 84">
        <circle cx="715" cy="232" r="8" />
        <path {...stroke(6)} d="M689 240c0-22 14-34 34-34M667 240c0-38 24-56 56-56" />
        <path {...stroke(6)} opacity=".4" d="M645 240c0-48 30-78 78-78" />
      </Icon>
    ),
  },
  {
    name: 'Battery',
    width: 72,
    drop: 2,
    icon: (
      <Icon width={34} height={20} viewBox="0 0 34 20">
        <path {...stroke(2)} d="M1 1h30v18H1z" />
        <path d="M5 4h11v12H5zM32 7h2v6h-2z" />
      </Icon>
    ),
  },
  {
    name: 'Project',
    width: 72,
    icon: (
      <Icon width={36} height={28} viewBox="0 0 36 28">
        <path {...stroke(2)} d="M2 1h32v21H2z" />
        <path d="M0 25h36v3H0zM18 7l7 9h-5v4h-4v-4h-5z" />
      </Icon>
    ),
  },
  {
    name: 'Volume',
    width: 72,
    icon: (
      <Icon width={37} height={34} viewBox="0 0 37 34">
        <path {...stroke(2)} d="M1 10h5l6-6v26l-6-6H1z" />
        <path {...stroke(2)} d="M18 11c3 4 3 8 0 12" />
        <path {...stroke(2)} opacity=".4" d="M23 6c6 7 6 15 0 22M28 1c9 10 9 22 0 32" />
      </Icon>
    ),
  },
  {
    name: 'Windows Ink',
    width: 86,
    icon: (
      <Icon width={40} height={41} viewBox="128 134 120 123">
        <g {...stroke(6)}>
          <path d="M168 249l2-26 40-76q6-10 14-6t3 14l-38 76zM204 156l16 8M178 184l16-30 10-2" />
          <path d="M166 202c-44 0-48 50-10 50M216 182c38-6 38 24 4 22" />
        </g>
      </Icon>
    ),
  },
];

const WindowsTaskbar = () => (
  <Taskbar>
    <StartButton aria-label="Start">
      <Icon width={32} height={32} viewBox="0 0 32 32">
        <path d="M0 4.500l13-2V15H0zM14.500 2.300L32 0v15H14.500zM0 16.500h13V29L0 27.300zM14.500 16.500H32V32l-17.500-2.500z" />
      </Icon>
    </StartButton>
    <SearchBox htmlFor="search">
      <Icon width={66} height={66} viewBox="0 0 66 66">
        <circle cx="33" cy="33" r="31" fill="none" stroke="#b5b89b" strokeWidth="4" />
        <circle cx="33" cy="33" r="26" fill="none" stroke="#fff" strokeWidth="6" />
      </Icon>
      <input id="search" placeholder="Type here to search" />
      <Icon width={26} height={36} viewBox="0 0 26 36" color="#c9cbb4">
        <path {...stroke(2)} d="M8 1h10q1 0 1 1v22q0 2-2 2H9q-2 0-2-2V2q0-1 1-1zM1 18v6q0 7 7 7h10q7 0 7-7v-6M13 31v4M7 35h12" />
      </Icon>
    </SearchBox>
    {apps.map((app) => (
      <AppButton
        key={app.name}
        aria-label={app.name}
        $active={app.active}
        $running={app.running}
        $stacked={app.stacked}
      >
        {app.icon}
        {app.badge && <Badge $x={63}>{app.badge}</Badge>}
      </AppButton>
    ))}
    <Tray>
      {trayIcons.map((item) => (
        <TrayButton key={item.name} aria-label={item.name} $width={item.width} $drop={item.drop}>
          {item.icon}
        </TrayButton>
      ))}
      <TrayButton $width={85}>ENG</TrayButton>
      <Clock $width={168}>
        <span>1:15 PM</span>
        <span>7/01/2018</span>
      </Clock>
      <TrayButton $width={94} aria-label="Action Center">
        <Icon width={36} height={36} viewBox="0 0 36 36">
          <path fillRule="evenodd" d="M0 0h36v31H20l-5 5v-5H0zM7 7v2h22V7zm0 7v2h22v-2zm0 7v2h22v-2z" />
        </Icon>
        <Badge $x={44}>1</Badge>
      </TrayButton>
      <ShowDesktop aria-label="Show desktop" />
    </Tray>
  </Taskbar>
);

const App = () => (
  <>
    <GlobalStyle />
    <Window>
      <TopMenu />
      <ToolOptions />
      <Workspace>
        <Toolbar />
        <Document />
        <RightDock />
      </Workspace>
    </Window>
    <WindowsTaskbar />
  </>
);

export default App;
